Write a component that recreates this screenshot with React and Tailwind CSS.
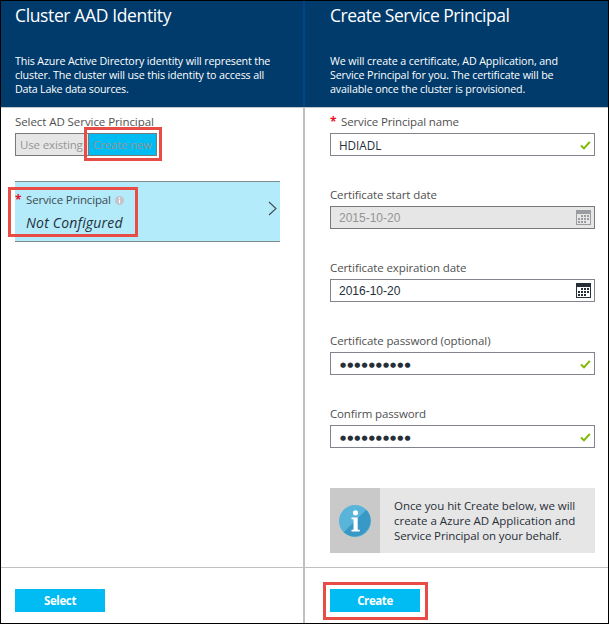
import React from "react";

const sans = "font-['Open_Sans','Noto_Sans',sans-serif]";

function Check() {
  return (
    <svg width="11" height="9" viewBox="0 0 11 9" className="mt-px mr-[3px] shrink-0">
      <path d="M1 4.6 L4 7.4 L9.8 0.9" fill="none" stroke="#7fba00" strokeWidth="2" />
    </svg>
  );
}

function Calendar({ color }) {
  const dots = [
    [5, 5], [8, 5], [11, 5],
    [2, 8], [5, 8], [8, 8], [11, 8],
    [2, 11], [5, 11], [8, 11],
  ];
  return (
    <svg width="15" height="15" viewBox="0 0 15 15" className="mr-[3px] shrink-0" shapeRendering="crispEdges">
      <rect x="0.5" y="0.5" width="14" height="14" fill="none" stroke={color} />
      <rect x="0" y="0" width="15" height="4" fill={color} />
      {dots.map(([x, y]) => (
        <rect key={`${x}-${y}`} x={x} y={y} width="2" height="2" fill={color} />
      ))}
    </svg>
  );
}

function Field({ label, spacing, required, disabled, icon, children }) {
  return (
    <div className="mb-[32px]">
      <div className="flex h-[18px] text-[11.5px] leading-[14px] whitespace-nowrap text-[#505050]">
        {required && <span className="w-[11px] text-[12px] font-bold text-[#e81123]">*</span>}
        <span className={spacing}>{label}</span>
      </div>
      <div
        className={`flex h-[23px] items-center justify-between border pl-[8px] ${
          disabled ? "border-[#77797b] bg-[#e6e6e6] text-[#959595]" : "border-[#81848c] bg-white text-[#262f38]"
        }`}
      >
        {children}
        {icon}
      </div>
    </div>
  );
}

function Header({ title, titleClass, lines }) {
  return (
    <div className="h-[107px] border-b border-[#c3c7cb] bg-[#003b6b] text-white">
      <div className={`pt-[2px] text-[17.5px] leading-[24px] whitespace-nowrap ${titleClass}`}>{title}</div>
      <div className="pt-[27px] text-[10.7px] leading-[14px] whitespace-nowrap">
        {lines.map(([text, spacing]) => (
          <div key={text} className={spacing}>{text}</div>
        ))}
      </div>
    </div>
  );
}

const dateText = "font-['Liberation_Sans',Arial,sans-serif] text-[12px] leading-[14px]";
const dotText = "font-['DejaVu_Sans',sans-serif] text-[7px] leading-[10px] tracking-[1.05px] pt-[3px] pl-px";

export default function App() {
  return (
    <div className={`flex h-[624px] w-[609px] border border-black bg-white ${sans}`}>
      <section className="flex w-[302px] flex-col">
        <div className="bg-[#003b6b] [&>div]:pl-[14px]">
          <Header
            title="Cluster AAD Identity"
            titleClass="tracking-[-0.37px]"
            lines={[
              ["This Azure Active Directory identity will represent the", "tracking-[-0.14px]"],
              ["cluster. The cluster will use this identity to access all", "tracking-[-0.14px]"],
              ["Data Lake data sources.", "tracking-[-0.22px]"],
            ]}
          />
        </div>
        <div className="flex h-[459px] flex-col pt-[7px] pl-[14px]">
          <div className="h-[18px] text-[11.5px] leading-[14px] tracking-[-0.07px] whitespace-nowrap text-[#505050]">
            Select AD Service Principal
          </div>
          <div className="relative flex h-[23px] w-[142px] text-[11.5px] leading-[21px] whitespace-nowrap text-[#959595]">
            <div className="w-[73px] border border-r-0 border-[#77797b] bg-[#e6e6e6] pl-[4px] tracking-[-0.15px]">Use existing</div>
            <div className="w-[69px] border border-[#77797b] bg-[#00bcf2] pl-[4px] tracking-[-0.2px]">Create new</div>
            <div className="absolute -top-[6px] left-[69px] h-[34px] w-[78px] border-3 border-[#e84c46]" />
          </div>
          <div className="relative mt-[25px] flex h-[61px] w-[265px] items-center justify-between border-y border-[#808a8d] bg-[#b3ebfb]">
            <div className="pt-[2px]">
              <div className="flex h-[14px] items-center text-[11.5px] leading-[14px] whitespace-nowrap text-[#3e4a50]">
                <span className="w-[11px] text-[12px] font-bold text-[#e81123]">*</span>
                <span className="w-[89px] tracking-[-0.15px]">Service Principal</span>
                <svg width="9" height="9" viewBox="0 0 9 9">
                  <circle cx="4.5" cy="4.5" r="4.5" fill="#c4c4c8" />
                  <path d="M4.5 1.5v1.4M4.5 3.8v3.4" stroke="#fff" strokeWidth="1.2" />
                </svg>
              </div>
              <div className="mt-[7px] ml-[11px] text-[14px] leading-[18px] tracking-[0.2px] whitespace-nowrap text-[#262f38] italic">Not Configured</div>
            </div>
            <svg width="9" height="15" viewBox="0 0 9 15" className="mr-[3px] mb-[6px]">
              <path d="M1 1 L8 7.5 L1 14" fill="none" stroke="#3c4a50" strokeWidth="1.1" />
            </svg>
            <div className="absolute top-[5px] -left-[7px] h-[50px] w-[130px] border-3 border-[#e84c46]" />
          </div>
        </div>
        <div className="h-[56px] border-t border-[#c0c0c0] pt-[21px] pl-[14px]">
          <div className="h-[23px] w-[90px] bg-[#00bcf2] text-center text-[11.5px] leading-[23px] font-bold tracking-[-0.4px] text-white">Select</div>
        </div>
      </section>

      <div className="flex w-[2px] flex-col">
        <div className="h-[106px] bg-[#004684]" />
        <div className="flex-1 bg-[#c0c0c0]" />
      </div>

      <section className="flex w-[303px] flex-col">
        <div className="bg-[#003b6b] [&>div]:pl-[25px]">
          <Header
            title="Create Service Principal"
            titleClass="tracking-[-0.5px]"
            lines={[
              ["We will create a certificate, AD Application, and", "tracking-[-0.1px]"],
              ["Service Principal for you. The certificate will be", "tracking-[-0.13px]"],
              ["available once the cluster is provisioned.", "tracking-[-0.14px]"],
            ]}
          />
        </div>
        <div className="flex h-[459px] flex-col pt-[7px] pr-[13px] pl-[25px]">
          <Field label="Service Principal name" spacing="tracking-[-0.14px]" required icon={<Check />}>
            <span className="pt-px text-[11.7px] leading-[14px]">HDIADL</span>
          </Field>
          <Field label="Certificate start date" spacing="tracking-[-0.12px]" disabled icon={<Calendar color="#9a9ca0" />}>
            <span className={dateText}>2015-10-20</span>
          </Field>
          <Field label="Certificate expiration date" spacing="tracking-[-0.1px]" icon={<Calendar color="#262f38" />}>
            <span className={dateText}>2016-10-20</span>
          </Field>
          <Field label="Certificate password (optional)" spacing="tracking-[-0.1px]" icon={<Check />}>
            <span className={dotText}>●●●●●●●●●●</span>
          </Field>
          <Field label="Confirm password" spacing="tracking-[-0.15px]" icon={<Check />}>
            <span className={dotText}>●●●●●●●●●●</span>
          </Field>
          <div className="mt-[8px] flex h-[65px] bg-[#e6e6e6]">
            <div className="flex w-[50px] items-center justify-center bg-[#c9c9c9]">
              <svg width="32" height="32" viewBox="0 0 32 32">
                <circle cx="16" cy="16" r="16" fill="#59b4d9" />
                <path d="M27.3 4.7 A16 16 0 0 1 4.7 27.3 Z" fill="#3999c6" />
                <circle cx="16.5" cy="7.8" r="2.6" fill="#fff" />
                <path d="M12.5 12.5h6.2v12.2h2v1.8h-8.2v-1.8h2v-10.4h-2z" fill="#fff" />
              </svg>
            </div>
            <div className="pt-[10px] pl-[14px] text-[11.5px] leading-[15px] whitespace-nowrap text-[#262f38]">
              <div className="tracking-[-0.06px]">Once you hit Create below, we will</div>
              <div className="tracking-[-0.02px]">create a Azure AD Application and</div>
              <div className="tracking-[-0.12px]">Service Principal on your behalf.</div>
            </div>
          </div>
        </div>
        <div className="h-[56px] border-t border-[#c0c0c0] pt-[21px] pl-[25px]">
          <div className="relative h-[23px] w-[90px] bg-[#00bcf2] text-center text-[11.5px] leading-[23px] font-bold tracking-[-0.4px] text-white">
            Create
            <div className="absolute -top-[7px] -left-[7px] h-[38px] w-[105px] border-3 border-[#e84c46]" />
          </div>
        </div>
      </section>
    </div>
  );
}
